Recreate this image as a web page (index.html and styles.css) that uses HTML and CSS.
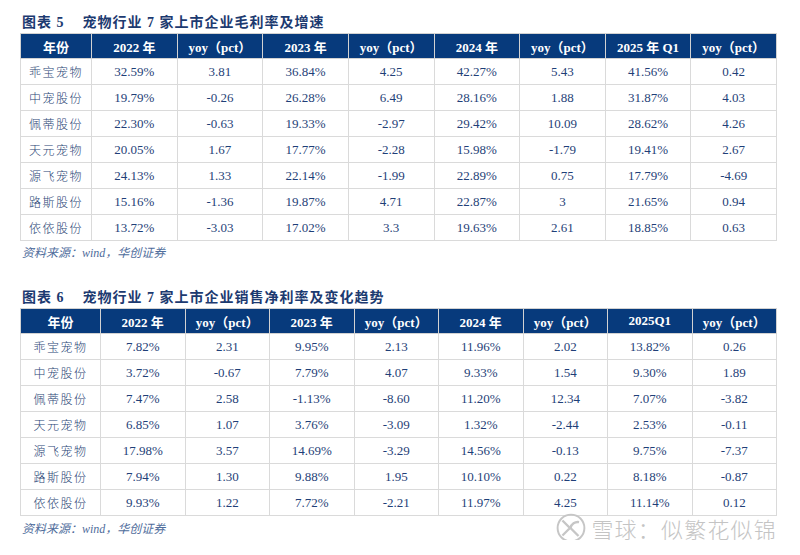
FILE: index.html
```html
<!DOCTYPE html>
<html lang="zh">
<head>
<meta charset="utf-8">
<link rel="stylesheet" href="styles.css">
</head>
<body>
<div class="page">
  <div class="title"><span class="fig">图表 5</span><span>宠物行业 7 家上市企业毛利率及增速</span></div>
  <table class="tbl t1">
    <colgroup><col class="c1"><col><col><col><col><col><col><col><col></colgroup>
    <thead>
      <tr><th>年份</th><th>2022 年</th><th>yoy（pct）</th><th>2023 年</th><th>yoy（pct）</th><th>2024 年</th><th>yoy（pct）</th><th>2025 年 Q1</th><th>yoy（pct）</th></tr>
    </thead>
    <tbody>
      <tr><td class="name">乖宝宠物</td><td>32.59%</td><td>3.81</td><td>36.84%</td><td>4.25</td><td>42.27%</td><td>5.43</td><td>41.56%</td><td>0.42</td></tr>
      <tr><td class="name">中宠股份</td><td>19.79%</td><td>-0.26</td><td>26.28%</td><td>6.49</td><td>28.16%</td><td>1.88</td><td>31.87%</td><td>4.03</td></tr>
      <tr><td class="name">佩蒂股份</td><td>22.30%</td><td>-0.63</td><td>19.33%</td><td>-2.97</td><td>29.42%</td><td>10.09</td><td>28.62%</td><td>4.26</td></tr>
      <tr><td class="name">天元宠物</td><td>20.05%</td><td>1.67</td><td>17.77%</td><td>-2.28</td><td>15.98%</td><td>-1.79</td><td>19.41%</td><td>2.67</td></tr>
      <tr><td class="name">源飞宠物</td><td>24.13%</td><td>1.33</td><td>22.14%</td><td>-1.99</td><td>22.89%</td><td>0.75</td><td>17.79%</td><td>-4.69</td></tr>
      <tr><td class="name">路斯股份</td><td>15.16%</td><td>-1.36</td><td>19.87%</td><td>4.71</td><td>22.87%</td><td>3</td><td>21.65%</td><td>0.94</td></tr>
      <tr><td class="name">依依股份</td><td>13.72%</td><td>-3.03</td><td>17.02%</td><td>3.3</td><td>19.63%</td><td>2.61</td><td>18.85%</td><td>0.63</td></tr>
    </tbody>
  </table>
  <div class="source">资料来源：wind，华创证券</div>

  <div class="title title2"><span class="fig">图表 6</span><span>宠物行业 7 家上市企业销售净利率及变化趋势</span></div>
  <table class="tbl t2">
    <colgroup><col class="c1"><col><col><col><col><col><col><col><col></colgroup>
    <thead>
      <tr><th>年份</th><th>2022 年</th><th>yoy（pct）</th><th>2023 年</th><th>yoy（pct）</th><th>2024 年</th><th>yoy（pct）</th><th>2025Q1</th><th>yoy（pct）</th></tr>
    </thead>
    <tbody>
      <tr><td class="name">乖宝宠物</td><td>7.82%</td><td>2.31</td><td>9.95%</td><td>2.13</td><td>11.96%</td><td>2.02</td><td>13.82%</td><td>0.26</td></tr>
      <tr><td class="name">中宠股份</td><td>3.72%</td><td>-0.67</td><td>7.79%</td><td>4.07</td><td>9.33%</td><td>1.54</td><td>9.30%</td><td>1.89</td></tr>
      <tr><td class="name">佩蒂股份</td><td>7.47%</td><td>2.58</td><td>-1.13%</td><td>-8.60</td><td>11.20%</td><td>12.34</td><td>7.07%</td><td>-3.82</td></tr>
      <tr><td class="name">天元宠物</td><td>6.85%</td><td>1.07</td><td>3.76%</td><td>-3.09</td><td>1.32%</td><td>-2.44</td><td>2.53%</td><td>-0.11</td></tr>
      <tr><td class="name">源飞宠物</td><td>17.98%</td><td>3.57</td><td>14.69%</td><td>-3.29</td><td>14.56%</td><td>-0.13</td><td>9.75%</td><td>-7.37</td></tr>
      <tr><td class="name">路斯股份</td><td>7.94%</td><td>1.30</td><td>9.88%</td><td>1.95</td><td>10.10%</td><td>0.22</td><td>8.18%</td><td>-0.87</td></tr>
      <tr><td class="name">依依股份</td><td>9.93%</td><td>1.22</td><td>7.72%</td><td>-2.21</td><td>11.97%</td><td>4.25</td><td>11.14%</td><td>0.12</td></tr>
    </tbody>
  </table>
  <div class="source-row">
    <div class="source">资料来源：wind，华创证券</div>
    <div class="watermark">
      <svg class="logo" width="30" height="30" viewBox="0 0 28 28">
        <circle cx="14" cy="14" r="12.5" fill="none" stroke="#c6c6c6" stroke-width="1.8"/>
        <path d="M6 7 L13 14 L6 21" fill="none" stroke="#c6c6c6" stroke-width="2.2"/>
        <path d="M21.5 8.5 A7 7 0 0 0 13.5 14" fill="none" stroke="#c6c6c6" stroke-width="2.2"/>
        <path d="M13.5 14 L21 21.5" fill="none" stroke="#c6c6c6" stroke-width="2.2"/>
      </svg>
      <span>雪球：似繁花似锦</span>
    </div>
  </div>
</div>
</body>
</html>
```

FILE: styles.css
```css
html, body {
  margin: 0;
  padding: 0;
  background: #ffffff;
}

.page {
  width: 757px;
  padding: 8px 0 0 20px;
  font-family: "Liberation Serif", "Noto Sans CJK SC", serif;
  color: #1f3f78;
}

.title {
  height: 25px;
  display: flex;
  align-items: center;
  padding-left: 2px;
  font-family: "Liberation Serif", "Noto Sans CJK SC", serif;
  font-weight: bold;
  font-size: 14px;
  color: #1c3a70;
  letter-spacing: 1px;
  white-space: nowrap;
}

.title .fig {
  margin-right: 18px;
}

.title2 {
  margin-top: 20px;
}

.tbl {
  width: 757px;
  border-collapse: collapse;
  table-layout: fixed;
}

.t1 .c1 { width: 71px; }
.t2 .c1 { width: 80px; }

.tbl th {
  height: 24px;
  padding: 0;
  background: #073a7c;
  color: #ffffff;
  font-family: "Liberation Serif", "Noto Sans CJK SC", serif;
  font-weight: bold;
  font-size: 13px;
  text-align: center;
  border: 1.5px solid #d2d2d2;
  white-space: nowrap;
}

.tbl td {
  height: 25px;
  padding: 0;
  text-align: center;
  font-size: 13px;
  color: #1f3f78;
  border: 1.5px solid #dadada;
  white-space: nowrap;
}

.tbl td.name {
  font-family: "Noto Sans CJK SC", sans-serif;
  font-weight: 300;
  font-size: 12px;
  letter-spacing: 1.5px;
  color: #2a4676;
}

.source {
  height: 22px;
  display: flex;
  align-items: center;
  padding-left: 2px;
  font-family: "Liberation Serif", "Noto Sans CJK SC", serif;
  font-style: italic;
  font-size: 12px;
  color: #4f6d9c;
}

.source-row {
  display: flex;
  justify-content: space-between;
  align-items: center;
  height: 24px;
}

.watermark {
  display: flex;
  align-items: center;
  gap: 5px;
  color: #c4c4c4;
  font-family: "Noto Sans CJK SC", sans-serif;
  font-weight: 300;
  font-size: 22px;
  line-height: 24px;
  letter-spacing: 1.2px;
}

.logo {
  display: block;
}
```
